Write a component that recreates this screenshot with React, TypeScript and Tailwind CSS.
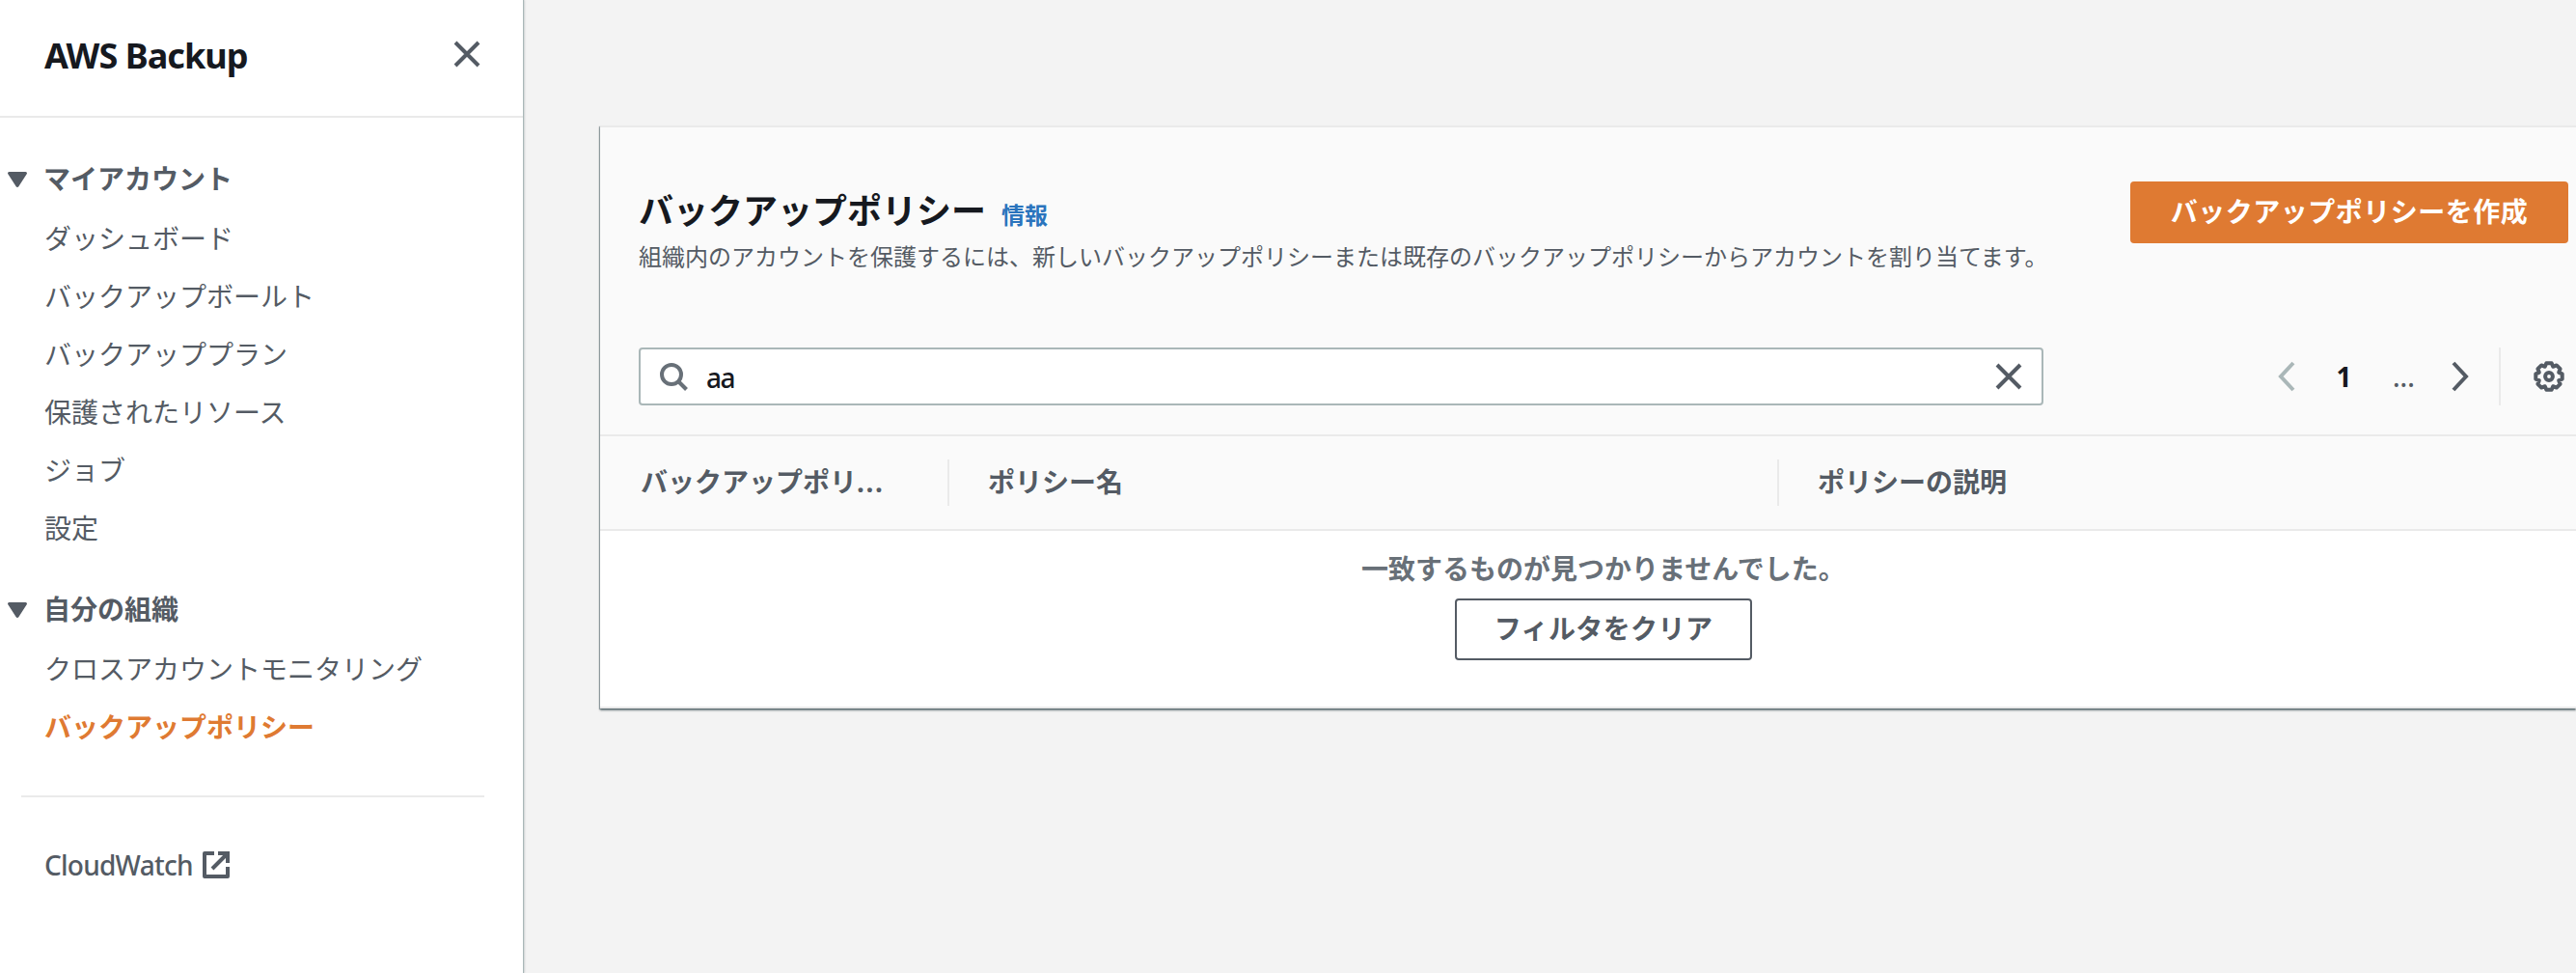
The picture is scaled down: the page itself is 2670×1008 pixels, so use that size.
import React from 'react';

type NavItem = {
  label: string;
  active?: boolean;
};

type NavSection = {
  title: string;
  items: NavItem[];
};

const sections: NavSection[] = [
  {
    title: 'マイアカウント',
    items: [
      { label: 'ダッシュボード' },
      { label: 'バックアップボールト' },
      { label: 'バックアッププラン' },
      { label: '保護されたリソース' },
      { label: 'ジョブ' },
      { label: '設定' },
    ],
  },
  {
    title: '自分の組織',
    items: [{ label: 'クロスアカウントモニタリング' }, { label: 'バックアップポリシー', active: true }],
  },
];

const CloseIcon = () => (
  <svg viewBox="0 0 32 32" className="size-8 shrink-0" fill="none" stroke="#545b64" strokeWidth="4">
    <path d="M4 4l24 24M28 4L4 28" />
  </svg>
);

const Caret = () => (
  <svg viewBox="0 0 20 16" className="mt-0.5 h-4 w-5 shrink-0" fill="#545b64">
    <path d="M1.5 0h17a1.5 1.5 0 0 1 1.2 2.3l-8.4 12.9a1.5 1.5 0 0 1-2.6 0L.3 2.3A1.5 1.5 0 0 1 1.5 0z" />
  </svg>
);

const ExternalIcon = () => (
  <svg viewBox="0 0 28 28" className="size-7 shrink-0" fill="none" stroke="#545b64" strokeWidth="4">
    <path strokeLinejoin="round" d="M12 2H2v24h24V16" />
    <path d="M16 2h10v10M26 2L10 18" />
  </svg>
);

const SearchIcon = () => (
  <svg viewBox="0 0 32 32" className="size-8 shrink-0" fill="none" stroke="#687078" strokeWidth="4">
    <circle cx="13" cy="14" r="10" />
    <path d="M20 21l8.5 8.5" />
  </svg>
);

const Chevron = ({ d, color }: { d: string; color: string }) => (
  <svg viewBox="0 0 18 32" className="h-8 w-[18px] shrink-0" fill="none" stroke={color} strokeWidth="4">
    <path d={d} />
  </svg>
);

const GearIcon = () => (
  <svg viewBox="0 0 32 32" className="size-8 shrink-0" fill="none" stroke="#545b64" strokeWidth="4">
    <path
      strokeLinejoin="round"
      d="M18.7 2.3L20.2 5.8 23.8 4.4 27.6 8.2 26.2 11.8 29.7 13.3V18.7L26.2 20.2 27.6 23.8 23.8 27.6 20.2 26.2 18.7 29.7H13.3L11.8 26.2 8.2 27.6 4.4 23.8 5.8 20.2 2.3 18.7V13.3L5.8 11.8 4.4 8.2 8.2 4.4 11.8 5.8 13.3 2.3z"
    />
    <circle cx="16" cy="16" r="3.9" />
  </svg>
);

const Sidebar = () => (
  <aside className="flex w-[542px] shrink-0 flex-col bg-white shadow-[1px_0_1px_0_#aab7b8,2px_0_2px_0_rgba(0,28,36,0.12)]">
    <header className="flex h-[122px] items-start justify-between border-b-2 border-[#eaeaea] pt-9 pr-[42px] pl-[46px]">
      <h2 className="text-[36px] leading-[44px] font-bold tracking-[-0.95px] text-[#16191f]">AWS Backup</h2>
      <div className="pt-1">
        <CloseIcon />
      </div>
    </header>

    <nav className="pt-[33px]">
      {sections.map((section) => (
        <div key={section.title} className="mb-6">
          <div className="flex h-[60px] items-center gap-[17px] pl-2">
            <Caret />
            <span className="font-bold">{section.title}</span>
          </div>
          <ul className="pt-0.5">
            {section.items.map((item) => (
              <li key={item.label} className="flex h-[60px] items-center pl-[46px]">
                <a className={item.active ? 'font-bold text-[#df7a32]' : ''}>{item.label}</a>
              </li>
            ))}
          </ul>
        </div>
      ))}
    </nav>

    <hr className="mt-[17px] mr-10 ml-[22px] border-t-2 border-[#eaeaea]" />
    <a className="mt-[50px] flex h-10 items-center gap-2.5 pl-[46px]">
      <span className="font-medium tracking-[-0.75px]">CloudWatch</span>
      <ExternalIcon />
    </a>
  </aside>
);

const PolicyPanel = () => (
  <section className="mt-[130px] ml-20 flex h-[604px] min-w-0 flex-1 flex-col border-y-2 border-[#eaeaea] bg-white shadow-[0_2px_2px_0_rgba(0,28,36,0.5),-1px_1px_1px_0_rgba(0,28,36,0.3)]">
    <div className="h-[320px] border-b-2 border-[#eaeaea] bg-[#fafafa] pl-10">
      <div className="flex h-[228px] items-start justify-between pr-2">
        <div className="pt-[61px]">
          <div className="flex items-baseline gap-4">
            <h1 className="text-[36px] leading-[52px] font-bold text-[#16191f]">バックアップポリシー</h1>
            <a className="text-2xl font-bold text-[#2a74bd]">情報</a>
          </div>
          <p className="text-2xl leading-[42px] whitespace-nowrap">
            組織内のアカウントを保護するには、新しいバックアップポリシーまたは既存のバックアップポリシーからアカウントを割り当てます。
          </p>
        </div>
        <button className="mt-14 h-16 w-[454px] shrink-0 rounded-[4px] bg-[#df7a32] pb-0.5 font-bold tracking-[0.5px] text-white">
          バックアップポリシーを作成
        </button>
      </div>

      <div className="flex h-[60px] items-center">
        <div className="flex h-[60px] w-[1456px] shrink-0 items-center rounded-[4px] border-2 border-[#aab7b8] bg-white pr-[18px] pl-[19px]">
          <SearchIcon />
          <span className="mt-0.5 ml-[17px] flex-1 font-medium tracking-[-1.4px] text-[#16191f]">aa</span>
          <CloseIcon />
        </div>
        <div className="ml-[243px] flex h-[60px] items-center">
          <Chevron d="M16 2L3 16l13 14" color="#aab7b8" />
          <span className="w-[99px] pl-0.5 text-center font-bold text-[#16191f]">1</span>
          <span className="w-[63px] pl-0.5 font-medium">...</span>
          <Chevron d="M2 2l13 14L2 30" color="#545b64" />
        </div>
        <div className="ml-auto flex h-[60px] items-center border-l-2 border-[#eaeaea] pr-3 pl-[34px]">
          <GearIcon />
        </div>
      </div>
    </div>

    <div className="flex h-[98px] items-center border-b-2 border-[#eaeaea] bg-[#fafafa] font-bold">
      <div className="flex h-12 w-[362px] items-center border-r-2 border-[#eaeaea] pb-0.5 pl-[42px]">
        <span>バックアップポリ</span>
        <span className="tracking-[1.6px]">...</span>
      </div>
      <div className="flex h-12 w-[860px] items-center border-r-2 border-[#eaeaea] pb-0.5 pl-10">
        <span>ポリシー名</span>
      </div>
      <div className="flex h-12 items-center pb-0.5 pl-10">
        <span>ポリシーの説明</span>
      </div>
    </div>

    <div className="flex w-[2080px] flex-col items-center pt-[17px]">
      <p className="leading-[44px] font-bold text-[#687078]">一致するものが見つかりませんでした。</p>
      <button className="mt-[9px] h-16 w-[308px] rounded-[4px] border-2 border-[#545b64] bg-white pb-0.5 font-bold tracking-[0.4px]">
        フィルタをクリア
      </button>
    </div>
  </section>
);

export default function App() {
  return (
    <div className="flex h-[1008px] w-[2670px] overflow-hidden bg-[#f3f3f3] font-['Noto_Sans','Noto_Sans_CJK_JP',sans-serif] text-[28px] leading-10 text-[#545b64]">
      <Sidebar />
      <PolicyPanel />
    </div>
  );
}
